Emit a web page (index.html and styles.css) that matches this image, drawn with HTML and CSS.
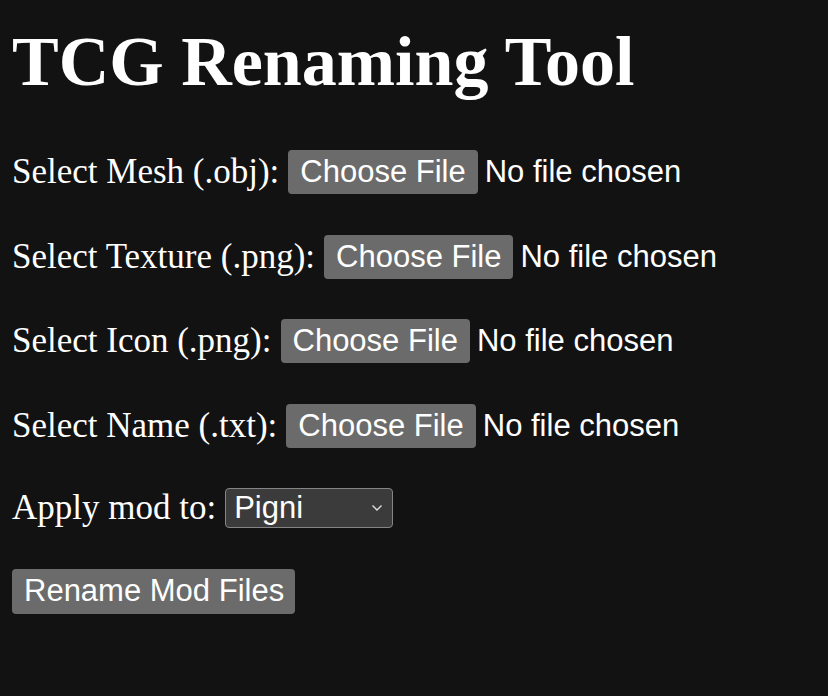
FILE: index.html
```html
<!DOCTYPE html>
<html lang="en">
<head>
<meta charset="utf-8">
<title>TCG Renaming Tool</title>
<link rel="stylesheet" href="styles.css">
</head>
<body>
<h1 class="title">TCG Renaming Tool</h1>
<div class="form">
  <div class="row">
    <span class="label">Select Mesh (.obj):</span>
    <span class="file"><span class="btn">Choose File</span><span class="file-name">No file chosen</span></span>
  </div>
  <div class="row">
    <span class="label">Select Texture (.png):</span>
    <span class="file"><span class="btn">Choose File</span><span class="file-name">No file chosen</span></span>
  </div>
  <div class="row">
    <span class="label">Select Icon (.png):</span>
    <span class="file"><span class="btn">Choose File</span><span class="file-name">No file chosen</span></span>
  </div>
  <div class="row">
    <span class="label">Select Name (.txt):</span>
    <span class="file"><span class="btn">Choose File</span><span class="file-name">No file chosen</span></span>
  </div>
  <div class="row row-select">
    <span class="label">Apply mod to:</span>
    <span class="select"><span class="select-value">Pigni</span><svg class="chev" width="12" height="8" viewBox="0 0 12 8"><path d="M1.5 1.5 L6 6 L10.5 1.5" fill="none" stroke="#e0e0e0" stroke-width="1.4"/></svg></span>
  </div>
  <div class="row row-action">
    <span class="btn btn-action">Rename Mod Files</span>
  </div>
</div>
</body>
</html>
```
FILE: styles.css
```css
html, body {
  margin: 0;
  padding: 0;
  background: #121212;
  color: #ffffff;
}
body {
  padding: 20px 12px 0 12px;
  font-family: "Liberation Serif", "Times New Roman", serif;
  font-size: 35px;
}
.title {
  margin: 0;
  font-size: 70px;
  font-weight: bold;
  line-height: 83px;
}
.form {
  margin-top: 47px;
  display: flex;
  flex-direction: column;
  gap: 40.5px;
}
.row {
  display: flex;
  align-items: center;
  height: 44px;
  white-space: nowrap;
}
.row-select { height: 40px; }
.row-action { height: 45px; }
.label {
  margin-right: 9px;
}
.file {
  display: flex;
  align-items: center;
  font-family: "Liberation Sans", Arial, sans-serif;
  font-size: 31px;
}
.btn {
  display: inline-flex;
  align-items: center;
  height: 44px;
  padding: 0 12px;
  background: #6b6b6b;
  color: #ffffff;
  border-radius: 4px;
  font-family: "Liberation Sans", Arial, sans-serif;
  font-size: 31px;
  box-sizing: border-box;
}
.file-name {
  margin-left: 7px;
}
.btn-action {
  height: 45px;
  width: 283px;
}
.select {
  display: inline-flex;
  align-items: center;
  justify-content: space-between;
  box-sizing: border-box;
  width: 168px;
  height: 40px;
  padding: 0 8px 0 8px;
  background: #3b3b3b;
  border: 1.5px solid #858585;
  border-radius: 4px;
  font-family: "Liberation Sans", Arial, sans-serif;
  font-size: 31px;
}
.chev {
  margin-right: 1px;
}
```
